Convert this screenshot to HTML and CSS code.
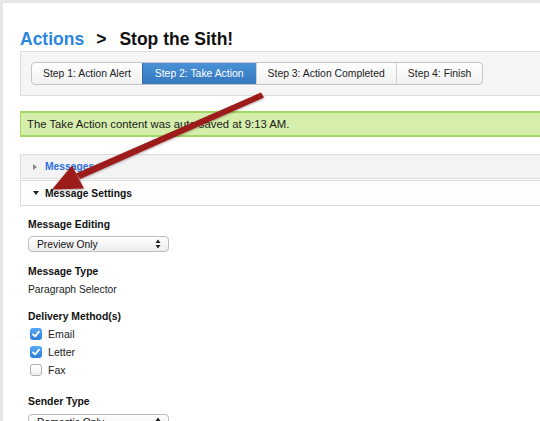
FILE: index.html
```html
<!DOCTYPE html>
<html>
<head>
<meta charset="utf-8">
<link rel="stylesheet" href="styles.css">
</head>
<body>
<div class="page">
  <h1 class="title"><span class="crumb">Actions</span><span class="sep">&gt;</span><span>Stop the Sith!</span></h1>
  <div class="steps">
    <div class="btn-group">
      <span class="step">Step 1: Action Alert</span>
      <span class="step active">Step 2: Take Action</span>
      <span class="step">Step 3: Action Completed</span>
      <span class="step">Step 4: Finish</span>
    </div>
  </div>
  <div class="alert">The Take Action content was auto saved at 9:13 AM.</div>
  <div class="accordion">
    <div class="acc-row closed"><span class="tri-right"></span><span class="acc-link">Messages</span></div>
    <div class="acc-row open"><span class="tri-down"></span><span class="acc-title">Message Settings</span></div>
  </div>
  <div class="fields">
    <div class="label first">Message Editing</div>
    <div class="select"><span>Preview Only</span><svg class="updown" viewBox="0 0 6 10" width="6" height="10"><path d="M3 0.5 L5.5 4 L0.5 4 Z M3 9.5 L5.5 6 L0.5 6 Z" fill="#222"/></svg></div>
    <div class="label">Message Type</div>
    <div class="value">Paragraph Selector</div>
    <div class="label">Delivery Method(s)</div>
    <div class="checks">
      <div class="check-row"><span class="box on"><svg viewBox="0 0 12 12" width="12" height="12"><path d="M3 6.3 L5.1 8.4 L9 3.6" fill="none" stroke="#fff" stroke-width="1.8" stroke-linecap="round" stroke-linejoin="round"/></svg></span>Email</div>
      <div class="check-row"><span class="box on"><svg viewBox="0 0 12 12" width="12" height="12"><path d="M3 6.3 L5.1 8.4 L9 3.6" fill="none" stroke="#fff" stroke-width="1.8" stroke-linecap="round" stroke-linejoin="round"/></svg></span>Letter</div>
      <div class="check-row"><span class="box"></span>Fax</div>
    </div>
    <div class="label sender">Sender Type</div>
    <div class="select"><span>Domestic Only</span><svg class="updown" viewBox="0 0 6 10" width="6" height="10"><path d="M3 0.5 L5.5 4 L0.5 4 Z M3 9.5 L5.5 6 L0.5 6 Z" fill="#222"/></svg></div>
  </div>
  <svg class="arrow" width="540" height="421" viewBox="0 0 540 421">
    <defs>
      <filter id="sh" x="-10%" y="-10%" width="120%" height="130%">
        <feDropShadow dx="0" dy="1" stdDeviation="1" flood-color="#000" flood-opacity="0.35"/>
      </filter>
    </defs>
    <g filter="url(#sh)" fill="#9c1a1a">
      <path d="M261 92.5 L264 97.5 L80 179 L76 173.5 Z"/>
      <path d="M52 189.5 L72 165.5 L84 188.5 Z"/>
    </g>
  </svg>
</div>
</body>
</html>
```
FILE: styles.css
```css
* { box-sizing: border-box; }
html, body { margin: 0; padding: 0; }
body {
  background: #e6e6e6;
  width: 540px;
  height: 421px;
  overflow: hidden;
  font-family: "Liberation Sans", Arial, sans-serif;
  color: #111;
}
.page {
  position: relative;
  margin: 3px 0 0 3px;
  height: 418px;
  background: #fff;
  padding-left: 17px;
  padding-top: 26px;
  overflow: hidden;
}
.title {
  margin: 0;
  font-size: 17.5px;
  font-weight: bold;
  line-height: 20px;
  height: 20px;
  color: #111;
  white-space: nowrap;
}
.crumb { color: #2b87db; }
.sep { margin: 0 13px 0 12px; }
.steps {
  margin-top: 2px;
  width: 540px;
  height: 45px;
  background: #f5f5f5;
  border: 1px solid #dedede;
  padding: 10px 0 0 10px;
}
.btn-group {
  display: inline-flex;
  height: 23px;
  border: 1px solid #c4c4c4;
  border-radius: 4px;
  background: linear-gradient(#ffffff, #f1f1f1);
  overflow: hidden;
}
.step {
  display: flex;
  align-items: center;
  font-size: 10.4px;
  color: #222;
  padding: 0 11px;
  border-left: 1px solid #d0d0d0;
  white-space: nowrap;
}
.step:first-child { border-left: none; }
.step.active {
  background: linear-gradient(#4a92d6, #3478c0);
  color: #fff;
  border-left-color: #2e6aa8;
  padding: 0 12px;
}
.alert {
  margin-top: 15px;
  width: 540px;
  height: 26px;
  background: #d5eeab;
  border: 1px solid #a3d865;
  border-width: 2px 1px 2px 1px;
  padding-left: 6px;
  font-size: 11.3px;
  line-height: 22px;
  color: #1a1a1a;
  white-space: nowrap;
}
.accordion {
  margin-top: 17px;
  width: 540px;
}
.acc-row {
  display: flex;
  align-items: center;
  border: 1px solid #dcdcdc;
  padding-left: 12px;
  font-size: 10.3px;
  font-weight: bold;
}
.acc-row.closed {
  height: 25px;
  background: #f3f3f3;
}
.acc-row.open {
  height: 26px;
  margin-top: 1px;
  background: #fdfdfd;
}
.acc-link { color: #2b6fdc; }
.acc-title { color: #111; }
.tri-right {
  width: 0; height: 0;
  border-top: 3.5px solid transparent;
  border-bottom: 3.5px solid transparent;
  border-left: 4px solid #888;
  margin-right: 8px;
}
.tri-down {
  width: 0; height: 0;
  border-left: 3.5px solid transparent;
  border-right: 3.5px solid transparent;
  border-top: 4px solid #222;
  margin-right: 6px;
}
.fields {
  padding-left: 8px;
  font-size: 10.3px;
}
.label {
  font-weight: bold;
  font-size: 10.4px;
  line-height: 14px;
  margin-top: 13px;
  color: #111;
}
.label.first { margin-top: 12px; }
.label.sender { margin-top: 16px; }
.select {
  margin-top: 4px;
  width: 141px;
  height: 16px;
  border: 1px solid #bdbdbd;
  border-radius: 4px;
  background: linear-gradient(#ffffff, #ededed);
  display: flex;
  align-items: center;
  justify-content: space-between;
  padding: 0 7px 0 8px;
  font-size: 10.3px;
  color: #111;
}
.label.sender + .select { margin-top: 5px; }
.updown { display: block; }
.value {
  margin-top: 4px;
  line-height: 14px;
  font-size: 10.3px;
  color: #222;
}
.checks { margin-top: 1px; }
.check-row {
  display: flex;
  align-items: center;
  height: 18px;
  font-size: 10.6px;
  color: #222;
  padding-left: 2px;
}
.box {
  width: 12px;
  height: 12px;
  border-radius: 3px;
  border: 1px solid #b0b0b0;
  background: linear-gradient(#ffffff, #eeeeee);
  margin-right: 6px;
  display: inline-flex;
  align-items: center;
  justify-content: center;
}
.box.on {
  border: none;
  background: linear-gradient(#5aa8f5, #2a7fdc);
}
.box svg { display: block; }
.arrow {
  position: absolute;
  left: -3px;
  top: -3px;
  pointer-events: none;
}
```
